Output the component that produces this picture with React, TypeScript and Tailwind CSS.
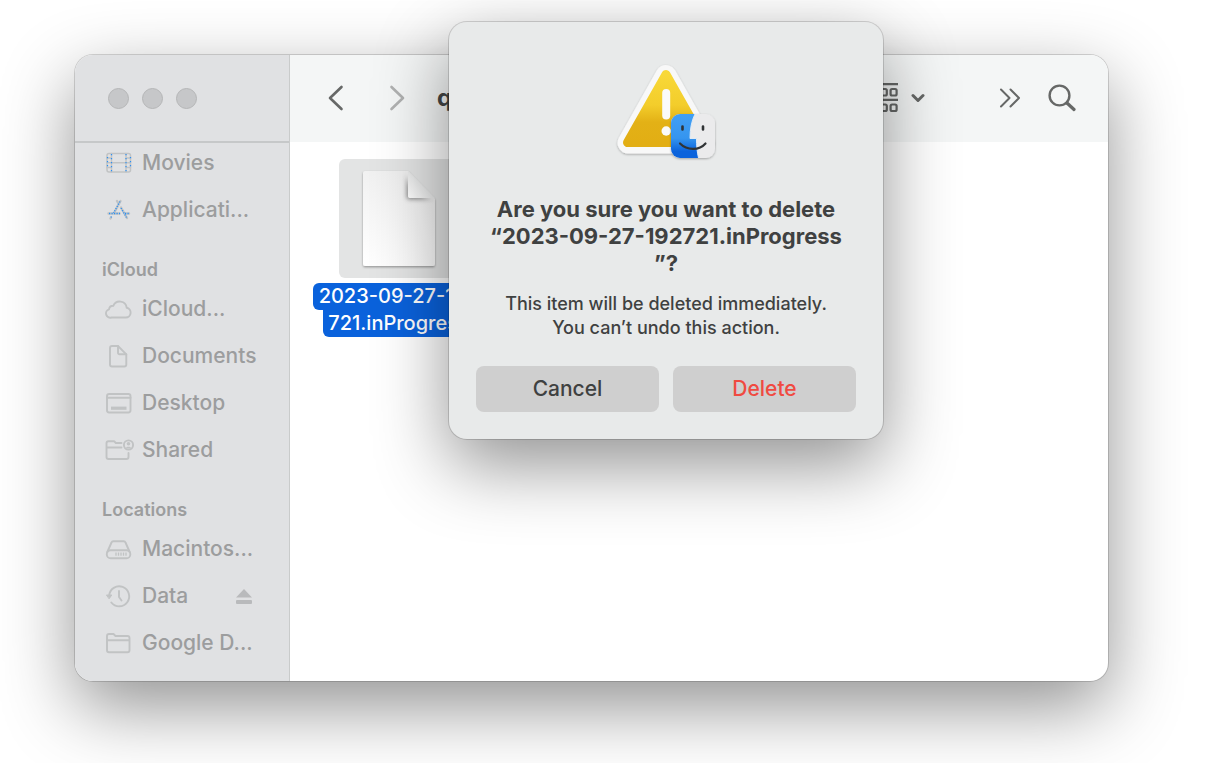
import { ReactNode } from "react";

interface SidebarItem {
  label: string;
  icon: ReactNode;
  ejectable?: boolean;
}

interface SidebarSection {
  title?: string;
  items: SidebarItem[];
}

const iconProps = {
  width: 28,
  height: 28,
  viewBox: "0 0 28 28",
  fill: "none",
  stroke: "currentColor",
  strokeWidth: 1.9,
  strokeLinecap: "round" as const,
  strokeLinejoin: "round" as const,
  "aria-hidden": true,
};

const MoviesIcon = () => (
  <svg {...iconProps} strokeWidth={1.5}>
    <rect x="3" y="4.5" width="23.5" height="18.5" rx="2" />
    <path d="M7.5 4.5V23M22 4.5V23M7.5 13.8H22M3 9h4.5M3 13.8h4.5M3 18.5h4.5M22 9h4.5M22 13.8h4.5M22 18.5h4.5" />
    <path
      d="M3.5 8v12M7.5 5v18M22 5v18M26.500 8v12"
      stroke="#2b90f5"
      strokeWidth="1.2"
      strokeLinecap="butt"
      strokeDasharray="1.2 2.800"
    />
  </svg>
);

const AppsIcon = () => (
  <svg {...iconProps} strokeWidth={2.4}>
    <path d="M13 5l1.5 2.500M16.500 5L10 17M4.500 17.500h11M17 11.500l6 10.500M20.500 17.500h4.500M7 21.500l-.5 1" />
    <path
      d="M16 5.500L9.500 17M5 17.500h11M17 12l5.500 9.500M21 17.500h4M7.500 20.500l-1 2"
      stroke="#2b90f5"
      strokeWidth="1.3"
      strokeLinecap="butt"
      strokeDasharray="1.2 1.300"
    />
  </svg>
);

const CloudIcon = () => (
  <svg {...iconProps}>
    <path d="M7.500 22.500h14.300a4.900 4.900 0 0 0 .9-9.700 7 7 0 0 0-13.400-2 4.200 4.200 0 0 0-4.300 3.500 4.200 4.200 0 0 0 2.500 8.200z" />
  </svg>
);

const DocumentIcon = () => (
  <svg {...iconProps}>
    <path d="M8 4h6l8.300 8.300v10.200a2 2 0 0 1-2 2H8a2 2 0 0 1-2-2V6a2 2 0 0 1 2-2z" />
    <path d="M14 4v6.800a1.500 1.500 0 0 0 1.500 1.500h6.800" />
  </svg>
);

const DesktopIcon = () => (
  <svg {...iconProps}>
    <rect x="3" y="5" width="23.500" height="18.500" rx="2.200" />
    <path d="M3 8.800h23.500" />
    <path d="M7 19.200h15.500" strokeWidth="3.200" strokeLinecap="butt" />
  </svg>
);

const SharedIcon = () => (
  <svg {...iconProps} className="overflow-visible">
    <path d="M17.500 7h-5.700l-1.500-1.700H4.500a2 2 0 0 0-2 2v13.700a2 2 0 0 0 2 2h18a2 2 0 0 0 2-2V17M2.500 11.500h15" />
    <circle cx="24.500" cy="9" r="4.600" />
    <circle cx="24.500" cy="7.800" r="1.800" fill="currentColor" stroke="none" />
    <path d="M21.300 12.500c1-2.500 5.400-2.500 6.400 0z" fill="currentColor" stroke="none" />
  </svg>
);

const DriveIcon = () => (
  <svg {...iconProps}>
    <path d="M3.300 17L7.500 7.500a2 2 0 0 1 1.800-1.300h10.400a2 2 0 0 1 1.800 1.300L25.700 17" />
    <rect x="2.800" y="15.200" width="23.500" height="8" rx="3.800" />
    <path d="M12 17.500v3.200M14.500 17.500v3.200M17 17.500v3.200M19.500 17.500v3.200M22 17.500v3.200" strokeWidth="1.3" strokeLinecap="butt" />
  </svg>
);

const ClockIcon = () => (
  <svg {...iconProps}>
    <path d="M5.200 13.500A10 10 0 1 1 7.300 20.500" />
    <path d="M2.800 13h5l-2.500 3.500z" fill="currentColor" strokeWidth="1" />
    <path d="M15 9v6l2.500 3.500" />
  </svg>
);

const FolderIcon = () => (
  <svg {...iconProps}>
    <path d="M5 5h4.500l2 2h12a2 2 0 0 1 2 2v12.300a2 2 0 0 1-2 2H5a2 2 0 0 1-2-2V7a2 2 0 0 1 2-2zM3 11.200h22.500" />
  </svg>
);

const sections: SidebarSection[] = [
  {
    items: [
      { label: "Movies", icon: <MoviesIcon /> },
      { label: "Applicati...", icon: <AppsIcon /> },
    ],
  },
  {
    title: "iCloud",
    items: [
      { label: "iCloud...", icon: <CloudIcon /> },
      { label: "Documents", icon: <DocumentIcon /> },
      { label: "Desktop", icon: <DesktopIcon /> },
      { label: "Shared", icon: <SharedIcon /> },
    ],
  },
  {
    title: "Locations",
    items: [
      { label: "Macintos...", icon: <DriveIcon /> },
      { label: "Data", icon: <ClockIcon />, ejectable: true },
      { label: "Google D...", icon: <FolderIcon /> },
    ],
  },
];

function Sidebar() {
  return (
    <aside className="flex w-[215px] shrink-0 flex-col rounded-l-[18px] border-r border-[#c9cbcb] bg-[#e0e1e3]">
      <div className="flex h-[88px] items-center gap-[13px] border-b-2 border-[#c6c8c9] pl-[33px]">
        {["Close", "Minimize", "Zoom"].map((name) => (
          <button key={name} aria-label={name} className="size-[21px] rounded-full border border-[#b5b6b7] bg-[#c6c7c9]" />
        ))}
      </div>
      <nav className="flex flex-col gap-[34px] pt-1 pl-[27px]">
        {sections.map((section, i) => (
          <div key={i}>
            {section.title && (
              <h2 className="mb-[13px] text-[18px] leading-5 font-semibold text-[#9c9d9e]">{section.title}</h2>
            )}
            <ul className="flex flex-col gap-[15px]">
              {section.items.map((item) => (
                <li key={item.label} className="flex h-8 items-center justify-between pr-9">
                  <a href="#" className="flex items-center gap-[10px] pl-0.5 text-[21px] font-medium text-[#9c9d9e]">
                    <span className="text-[#c1c3c4]">{item.icon}</span>
                    <span className="whitespace-nowrap">{item.label}</span>
                  </a>
                  {item.ejectable && (
                    <button aria-label="Eject" className="text-[#b9babc]">
                      <svg width="18" height="18" viewBox="0 0 18 18" fill="currentColor" aria-hidden="true">
                        <path d="M9 2l8 8.500H1z" />
                        <rect x="1" y="13" width="16" height="4" rx="1" />
                      </svg>
                    </button>
                  )}
                </li>
              ))}
            </ul>
          </div>
        ))}
      </nav>
    </aside>
  );
}

function Toolbar() {
  return (
    <header className="flex h-[87px] items-center justify-between rounded-tr-[18px] bg-[#f4f6f6] pr-8 pb-0.5 pl-[38px] text-[#666867]">
      <div className="flex items-center">
        <button aria-label="Back">
          <svg width="16" height="26" viewBox="0 0 16 26" fill="none" stroke="currentColor" strokeWidth="2.600" strokeLinecap="round" strokeLinejoin="round">
            <path d="M13.500 2L2 13l11.500 11" />
          </svg>
        </button>
        <button aria-label="Forward" className="ml-[45px] text-[#b0b1b1]">
          <svg width="16" height="26" viewBox="0 0 16 26" fill="none" stroke="currentColor" strokeWidth="2.600" strokeLinecap="round" strokeLinejoin="round">
            <path d="M2.500 2L14 13 2.500 24" />
          </svg>
        </button>
        <h1 className="ml-8 text-2xl font-bold text-[#444645]">q</h1>
      </div>
      <div className="flex items-center">
        <button aria-label="Group items" className="flex items-center gap-3">
          <svg width="30" height="30" viewBox="0 0 30 30" fill="none" stroke="currentColor" strokeWidth="2.200">
            <path d="M1 1.200h28M1 16.800h28" />
            <rect x="2" y="6" width="6" height="6.500" rx="1.500" />
            <rect x="11.800" y="6" width="6" height="6.500" rx="1.500" />
            <rect x="21.600" y="6" width="6" height="6.500" rx="1.500" />
            <rect x="2" y="21.500" width="6" height="6.500" rx="1.500" />
            <rect x="11.800" y="21.500" width="6" height="6.500" rx="1.500" />
            <rect x="21.600" y="21.500" width="6" height="6.500" rx="1.500" />
          </svg>
          <svg width="14" height="10" viewBox="0 0 14 10" fill="none" stroke="currentColor" strokeWidth="3" strokeLinecap="round" strokeLinejoin="round">
            <path d="M2 2.500l5 5 5-5" />
          </svg>
        </button>
        <button aria-label="More" className="ml-[74px]">
          <svg width="22" height="20" viewBox="0 0 22 20" fill="none" stroke="currentColor" strokeWidth="2" strokeLinecap="round" strokeLinejoin="round">
            <path d="M2 1.500L10.500 10 2 18.500M11.500 1.500L20 10l-8.500 8.500" />
          </svg>
        </button>
        <button aria-label="Search" className="ml-[27px]">
          <svg width="28" height="28" viewBox="0 0 28 28" fill="none" stroke="currentColor" strokeLinecap="round">
            <circle cx="11.500" cy="11.500" r="9.900" strokeWidth="2.400" />
            <path d="M19 19l7 6.500" strokeWidth="3.200" />
          </svg>
        </button>
      </div>
    </header>
  );
}

function FileItem() {
  return (
    <button className="flex w-[217px] flex-col items-center pt-[17px] text-[20px] leading-[27px] font-medium text-white">
      <span className="flex size-[119px] items-center justify-center rounded-md bg-[#e3e4e4]">
        <svg width="80" height="104" viewBox="0 0 80 104" aria-hidden="true">
          <defs>
            <linearGradient id="paper" x1="0" y1="1" x2="0.4" y2="0">
              <stop offset="0" stopColor="#ffffff" />
              <stop offset="1" stopColor="#efefef" />
            </linearGradient>
            <linearGradient id="fold" x1="0" y1="1" x2="0.6" y2="0.4">
              <stop offset="0" stopColor="#ffffff" />
              <stop offset="1" stopColor="#e2e3e3" />
            </linearGradient>
            <filter id="soft" x="-30%" y="-30%" width="160%" height="160%">
              <feDropShadow dx="0" dy="1.2" stdDeviation="0.9" floodOpacity="0.35" />
            </filter>
            <filter id="foldShadow" x="-50%" y="-50%" width="200%" height="200%">
              <feDropShadow dx="-1.5" dy="1.5" stdDeviation="2" floodOpacity="0.4" />
            </filter>
            <clipPath id="paperClip">
              <path d="M0 0h49l31 31v73H0z" />
            </clipPath>
          </defs>
          <path d="M6 4h43l27 28v65a2 2 0 0 1-2 2H6a2 2 0 0 1-2-2V6a2 2 0 0 1 2-2z" fill="url(#paper)" filter="url(#soft)" />
          <g clipPath="url(#paperClip)">
            <path d="M49 4C50 17 58 28 76 31H52a3 3 0 0 1-3-3z" fill="url(#fold)" filter="url(#foldShadow)" />
          </g>
          <path d="M49 4l27 27H52a3 3 0 0 1-3-3z" fill="url(#fold)" />
        </svg>
      </span>
      <span className="mt-[5px] rounded-md bg-[#0a62dc] px-[6px]">2023-09-27-192</span>
      <span className="rounded-b-md bg-[#0a62dc] px-[5px]">721.inProgress</span>
    </button>
  );
}

function WarningIcon() {
  return (
    <svg width="106" height="102" viewBox="0 0 106 102" aria-hidden="true">
      <defs>
        <linearGradient id="amber" x1="0" y1="0" x2="0" y2="1">
          <stop offset="0" stopColor="#f8d838" />
          <stop offset="0.45" stopColor="#f3cd2b" />
          <stop offset="0.7" stopColor="#e3b116" />
          <stop offset="1" stopColor="#e2ae14" />
        </linearGradient>
        <linearGradient id="finderBlue" x1="0" y1="0" x2="0" y2="1">
          <stop offset="0" stopColor="#429ff3" />
          <stop offset="0.55" stopColor="#3595ef" />
          <stop offset="0.85" stopColor="#0b63dc" />
        </linearGradient>
        <filter id="iconShadow" x="-20%" y="-20%" width="140%" height="140%">
          <feDropShadow dx="0" dy="1" stdDeviation="1.2" floodOpacity="0.3" />
        </filter>
        <clipPath id="finderClip">
          <rect x="58" y="51" width="44" height="44" rx="9" />
        </clipPath>
      </defs>
      <path
        d="M53 12.500L15 80h76z"
        fill="#f8f8f8"
        stroke="#f8f8f8"
        strokeWidth="21"
        strokeLinejoin="round"
        filter="url(#iconShadow)"
      />
      <path
        d="M53 11.500L14.500 79.500h77z"
        fill="url(#amber)"
        stroke="url(#amber)"
        strokeWidth="9"
        strokeLinejoin="round"
      />
      <rect x="49.200" y="26" width="8" height="30.500" rx="4" fill="#fafafa" />
      <circle cx="53.200" cy="68" r="4.700" fill="#fafafa" />
      <rect x="58" y="51" width="44" height="44" rx="9" fill="#ebebec" filter="url(#iconShadow)" />
      <g clipPath="url(#finderClip)">
        <path d="M58 51h24c-3.500 7-5 15-5 24.500h6.500c0 7 .5 13 2 19.500H58z" fill="url(#finderBlue)" />
        <path d="M82 51c-3.500 7-5 15-5 24.500h6.500c0 7 .5 13 2 19.500" fill="none" stroke="#dfeaf5" strokeWidth="1" />
      </g>
      <path d="M69.500 63.500v3M90 63.500v3" stroke="#303335" strokeWidth="2.600" strokeLinecap="round" />
      <path d="M67 80.500c7 7 19 7.500 25.500 0" fill="none" stroke="#303335" strokeWidth="2.200" strokeLinecap="round" />
    </svg>
  );
}

function DeleteDialog() {
  return (
    <div
      role="alertdialog"
      aria-labelledby="dialog-title"
      aria-describedby="dialog-text"
      className="absolute -top-[33px] left-[374px] flex w-[434px] flex-col items-center rounded-[18px] bg-[#e8eaea] px-[27px] pt-[41px] pb-[27px] text-center text-[#3f4141] shadow-[0_0_0_1px_rgba(0,0,0,0.15),0_26px_72px_rgba(0,0,0,0.43)]"
    >
      <WarningIcon />
      <h2 id="dialog-title" className="mt-[31px] text-[22px] leading-[27px] font-bold">
        Are you sure you want to delete
        <br />
        “2023-09-27-192721.inProgress
        <br />
        ”?
      </h2>
      <p id="dialog-text" className="mt-[15px] text-[18px] leading-6 font-medium">
        This item will be deleted immediately.
        <br />
        You can’t undo this action.
      </p>
      <div className="mt-[26px] grid w-full grid-cols-2 gap-[14px] text-[21px] font-medium">
        <button className="h-[46px] rounded-lg bg-[#cfcfcf]">Cancel</button>
        <button className="h-[46px] rounded-lg bg-[#cfcfcf] text-[#f04a41]">Delete</button>
      </div>
    </div>
  );
}

export default function App() {
  return (
    <div className="flex min-h-screen bg-white pt-[55px] pr-[107px] pb-[82px] pl-[75px] font-[Inter,sans-serif]">
      <div className="relative flex flex-1 rounded-[18px] bg-white shadow-[0_0_0_1px_rgba(0,0,0,0.15),0_26px_72px_rgba(0,0,0,0.43)]">
        <Sidebar />
        <main className="flex-1">
          <Toolbar />
          <FileItem />
        </main>
        <DeleteDialog />
      </div>
    </div>
  );
}
